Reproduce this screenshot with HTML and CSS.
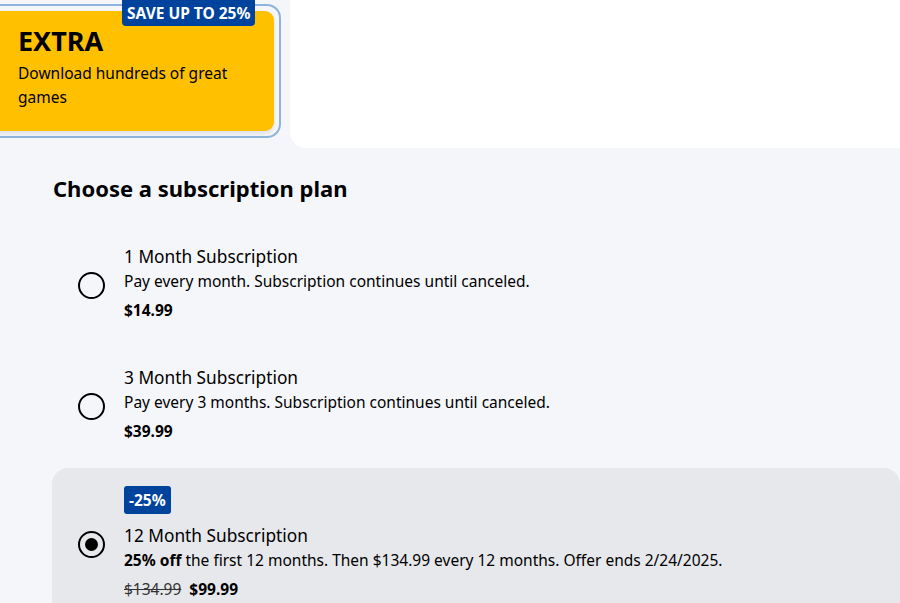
FILE: index.html
```html
<!DOCTYPE html>
<html>
<head>
<meta charset="utf-8">
<link rel="stylesheet" href="styles.css">
</head>
<body>
<div class="top">
  <div class="tiers">
    <div class="tier-ring">
      <div class="tier-card">
        <h2 class="tier-name">EXTRA</h2>
        <p class="tier-desc">Download hundreds of great games</p>
      </div>
      <span class="tier-badge">SAVE UP TO 25%</span>
    </div>
  </div>
  <div class="panel"></div>
</div>
<section class="plans">
  <h1 class="plans-title">Choose a subscription plan</h1>
  <div class="plan">
    <span class="radio"></span>
    <div class="plan-body">
      <div class="plan-name">1 Month Subscription</div>
      <div class="plan-desc">Pay every month. Subscription continues until canceled.</div>
      <div class="plan-price"><b>$14.99</b></div>
    </div>
  </div>
  <div class="plan">
    <span class="radio"></span>
    <div class="plan-body">
      <div class="plan-name">3 Month Subscription</div>
      <div class="plan-desc">Pay every 3 months. Subscription continues until canceled.</div>
      <div class="plan-price"><b>$39.99</b></div>
    </div>
  </div>
  <div class="plan plan-selected">
    <span class="radio radio-on"></span>
    <div class="plan-body">
      <span class="plan-badge">-25%</span>
      <div class="plan-name">12 Month Subscription</div>
      <div class="plan-desc"><b>25% off</b> the first 12 months. Then $134.99 every 12 months. Offer ends 2/24/2025.</div>
      <div class="plan-price"><s class="old">$134.99</s><b>$99.99</b></div>
    </div>
  </div>
</section>
</body>
</html>
```
FILE: styles.css
```css
* { box-sizing: border-box; }
html, body { margin: 0; padding: 0; }
body {
  background: #f5f6fa;
  font-family: "Noto Sans", "Open Sans", sans-serif;
  color: #000;
  width: 900px;
  height: 603px;
  overflow: hidden;
}
.top {
  display: flex;
  height: 148px;
}
.tiers {
  width: 290px;
  flex: none;
  position: relative;
}
.tier-ring {
  position: absolute;
  left: -20px;
  top: 4px;
  width: 301px;
  height: 134px;
  border: 2px solid #8db4dc;
  border-radius: 14px;
  padding: 5px;
}
.tier-card {
  background: #ffc000;
  border-radius: 9px;
  height: 120px;
  padding: 14px 20px 0 31px;
  box-shadow: 0 3px 4px rgba(0,0,0,0.08);
}
.tier-name {
  margin: 0;
  font-size: 27px;
  font-weight: 700;
  line-height: 32px;
}
.tier-desc {
  margin: 4px 0 0;
  font-size: 15.5px;
  line-height: 24px;
  width: 225px;
}
.tier-badge {
  position: absolute;
  top: -6px;
  left: 140px;
  background: #00439c;
  color: #fff;
  font-weight: 700;
  font-size: 15.5px;
  line-height: 22px;
  padding: 2px 5px 2px 5px;
  border-radius: 0 0 4px 4px;
}
.panel {
  flex: 1;
  background: #fff;
  border-bottom-left-radius: 16px;
}
.plans {
  padding: 26px 0 0 52px;
}
.plans-title {
  margin: 0 0 0 1px;
  font-size: 22px;
  font-weight: 700;
  line-height: 28px;
}
.plan {
  display: flex;
  align-items: center;
  padding: 0 0 0 26px;
  height: 121px;
}
.plans-title + .plan { margin-top: 23px; }
.radio {
  width: 27px;
  height: 27px;
  border: 2px solid #000;
  border-radius: 50%;
  flex: none;
  margin-right: 19px;
  position: relative;
}
.radio-on::after {
  content: "";
  position: absolute;
  left: 5px;
  top: 5px;
  width: 13px;
  height: 13px;
  background: #000;
  border-radius: 50%;
}
.plan-name {
  font-size: 17.3px;
  line-height: 24px;
}
.plan-desc {
  font-size: 15.5px;
  line-height: 24px;
}
.plan-price {
  font-size: 15.5px;
  line-height: 34px;
}
.old {
  color: #333;
  margin-right: 8px;
}
.plan-selected {
  background: #e7e8ec;
  border-radius: 16px 16px 0 0;
  height: auto;
  margin-top: 1px;
  padding: 18px 0 18px 26px;
}
.plan-selected .radio { top: -2px; }
.plan-badge {
  display: inline-block;
  background: #00439c;
  color: #fff;
  font-weight: 700;
  font-size: 15.5px;
  line-height: 22px;
  padding: 3px 5px;
  border-radius: 3px;
  margin-bottom: 10px;
}
```
